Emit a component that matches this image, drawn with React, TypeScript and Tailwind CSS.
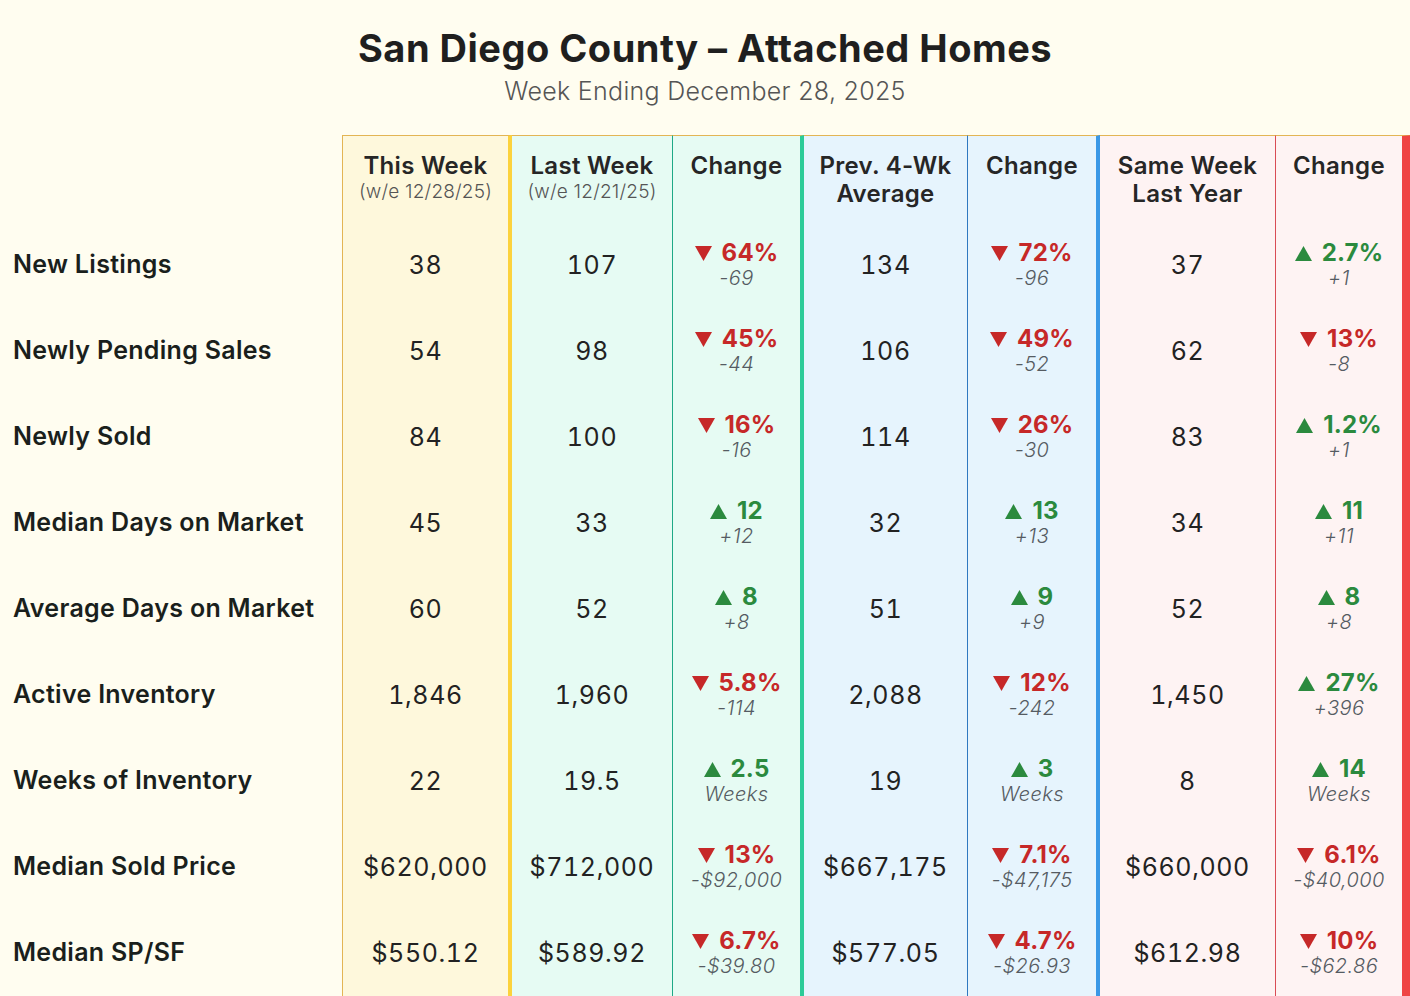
import React from "react";

type Chg = { dir: "up" | "down"; main: string; sub: string };
type Row = {
  label: string;
  tw: string;
  lw: string;
  c1: Chg;
  avg: string;
  c2: Chg;
  ly: string;
  c3: Chg;
};

const rows: Row[] = [
  { label: "New Listings", tw: "38", lw: "107", c1: { dir: "down", main: "64%", sub: "-69" }, avg: "134", c2: { dir: "down", main: "72%", sub: "-96" }, ly: "37", c3: { dir: "up", main: "2.7%", sub: "+1" } },
  { label: "Newly Pending Sales", tw: "54", lw: "98", c1: { dir: "down", main: "45%", sub: "-44" }, avg: "106", c2: { dir: "down", main: "49%", sub: "-52" }, ly: "62", c3: { dir: "down", main: "13%", sub: "-8" } },
  { label: "Newly Sold", tw: "84", lw: "100", c1: { dir: "down", main: "16%", sub: "-16" }, avg: "114", c2: { dir: "down", main: "26%", sub: "-30" }, ly: "83", c3: { dir: "up", main: "1.2%", sub: "+1" } },
  { label: "Median Days on Market", tw: "45", lw: "33", c1: { dir: "up", main: "12", sub: "+12" }, avg: "32", c2: { dir: "up", main: "13", sub: "+13" }, ly: "34", c3: { dir: "up", main: "11", sub: "+11" } },
  { label: "Average Days on Market", tw: "60", lw: "52", c1: { dir: "up", main: "8", sub: "+8" }, avg: "51", c2: { dir: "up", main: "9", sub: "+9" }, ly: "52", c3: { dir: "up", main: "8", sub: "+8" } },
  { label: "Active Inventory", tw: "1,846", lw: "1,960", c1: { dir: "down", main: "5.8%", sub: "-114" }, avg: "2,088", c2: { dir: "down", main: "12%", sub: "-242" }, ly: "1,450", c3: { dir: "up", main: "27%", sub: "+396" } },
  { label: "Weeks of Inventory", tw: "22", lw: "19.5", c1: { dir: "up", main: "2.5", sub: "Weeks" }, avg: "19", c2: { dir: "up", main: "3", sub: "Weeks" }, ly: "8", c3: { dir: "up", main: "14", sub: "Weeks" } },
  { label: "Median Sold Price", tw: "$620,000", lw: "$712,000", c1: { dir: "down", main: "13%", sub: "-$92,000" }, avg: "$667,175", c2: { dir: "down", main: "7.1%", sub: "-$47,175" }, ly: "$660,000", c3: { dir: "down", main: "6.1%", sub: "-$40,000" } },
  { label: "Median SP/SF", tw: "$550.12", lw: "$589.92", c1: { dir: "down", main: "6.7%", sub: "-$39.80" }, avg: "$577.05", c2: { dir: "down", main: "4.7%", sub: "-$26.93" }, ly: "$612.98", c3: { dir: "down", main: "10%", sub: "-$62.86" } },
];

const FONT = "font-['Inter','Noto_Sans',sans-serif]";

const colCls = [
  "w-[170px] border-l border-l-[#e3b554] border-r-4 border-r-[#fcd23c] bg-[#fef8dc]",
  "w-[161px] border-r border-r-[#1fa886] bg-[#e6fbf3]",
  "w-[131px] border-r-4 border-r-[#2ccb98] bg-[#e6fbf3]",
  "w-[164px] border-r border-r-[#2f78c0] bg-[#e6f4fd]",
  "w-[132px] border-r-4 border-r-[#3a98e6] bg-[#e6f4fd]",
  "w-[176px] border-r border-r-[#d94c55] bg-[#fef3f3]",
  "w-[138px] border-r-[12px] border-r-[#ef4444] bg-[#fef3f3]",
];

function Change({ c }: { c: Chg }) {
  const up = c.dir === "up";
  return (
    <div className="flex flex-col items-center">
      <div className={`flex items-center gap-[10px] text-[24px] font-bold leading-[24px] tracking-[0.2px] ${up ? "text-[#2b8a3e]" : "text-[#c62828]"}`}>
        <svg width="17" height="15" viewBox="0 0 17 15" className="shrink-0">
          {up ? <polygon points="8.5,0 17,15 0,15" fill="currentColor" /> : <polygon points="0,0 17,0 8.5,15" fill="currentColor" />}
        </svg>
        <span>{c.main}</span>
      </div>
      <div className="mt-[2px] text-[20px] font-light italic leading-[22px] tracking-[0.4px] text-[#555b62]">{c.sub}</div>
    </div>
  );
}

function Value({ v }: { v: string }) {
  return <div className="text-[25px] font-normal leading-[26px] tabular-nums tracking-[0.6px] text-[#222]">{v}</div>;
}

export default function App() {
  const sub = "text-[19px] font-light leading-[24px] tracking-[0.2px] text-[#555]";
  const headers: React.ReactNode[] = [
    <>
      <div className="font-semibold">This Week</div>
      <div className={sub}>(w/e 12/28/25)</div>
    </>,
    <>
      <div className="font-semibold">Last Week</div>
      <div className={sub}>(w/e 12/21/25)</div>
    </>,
    <div className="font-semibold">Change</div>,
    <div className="font-semibold">Prev. 4-Wk<br />Average</div>,
    <div className="font-semibold">Change</div>,
    <div className="font-semibold">Same Week<br />Last Year</div>,
    <div className="font-semibold">Change</div>,
  ];

  return (
    <div className={`${FONT} w-[1410px] h-[996px] overflow-hidden bg-[#fffdf0] text-[#222]`}>
      <div className="flex flex-col items-center pt-[26px]">
        <h1 className="text-[38px] font-bold leading-[44px] tracking-[0.5px] text-[#1f1f1f]">San Diego County – Attached Homes</h1>
        <div className="mt-[6px] text-[25px] font-light leading-[30px] tracking-[0.3px] text-[#555]">Week Ending December 28, 2025</div>
      </div>
      <div className="mt-[29px] flex">
        {/* label column */}
        <div className="w-[342px] shrink-0">
          <div className="h-[87px]" />
          {rows.map((r) => (
            <div key={r.label} className="flex h-[86px] items-center pl-[13px] text-[25px] font-semibold tracking-[0.3px] text-[#1a1f1c]">
              {r.label}
            </div>
          ))}
        </div>
        {colCls.map((cls, ci) => (
          <div key={ci} className={`shrink-0 border-t border-t-[#e3b554] ${cls}`}>
            <div className="flex h-[86px] flex-col items-center pt-[16px] text-center text-[24px] leading-[28px] tracking-[0.3px] text-[#262626]">
              {headers[ci]}
            </div>
            {rows.map((r) => {
              let content: React.ReactNode;
              if (ci === 0) content = <Value v={r.tw} />;
              else if (ci === 1) content = <Value v={r.lw} />;
              else if (ci === 2) content = <Change c={r.c1} />;
              else if (ci === 3) content = <Value v={r.avg} />;
              else if (ci === 4) content = <Change c={r.c2} />;
              else if (ci === 5) content = <Value v={r.ly} />;
              else content = <Change c={r.c3} />;
              return (
                <div key={r.label} className="flex h-[86px] items-center justify-center">
                  {content}
                </div>
              );
            })}
          </div>
        ))}
      </div>
    </div>
  );
}
